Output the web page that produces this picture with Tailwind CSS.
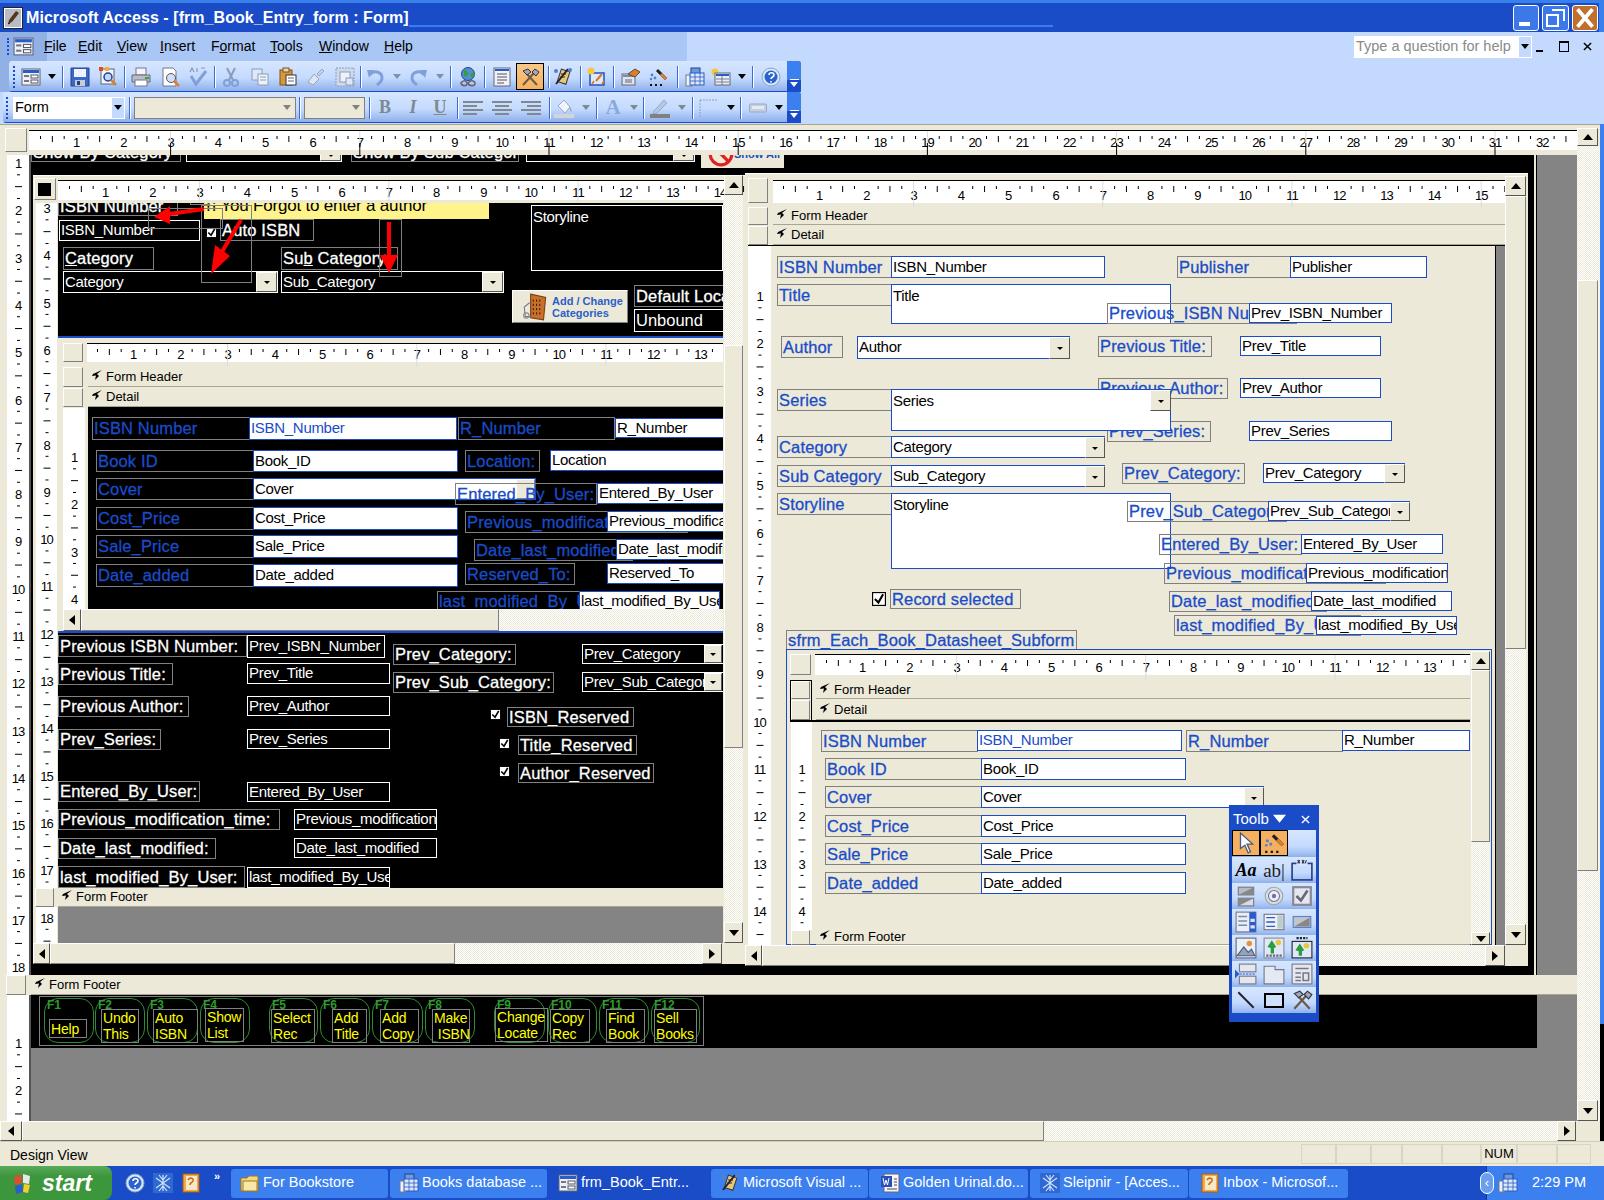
<!DOCTYPE html>
<html lang="en">
<head>
<meta charset="UTF-8">
<title>Microsoft Access - frm_Book_Entry_form</title>
<script src="https://cdn.jsdelivr.net/npm/@tailwindcss/browser@4"></script>
</head>
<body class="bg-[#848484]">
<!-- icon sheet -->
<svg class="hidden">
  <symbol id="tri" viewBox="0 0 8 8"><polygon points="0,1 8,1 4,6" fill="currentColor"/></symbol>
  <symbol id="form" viewBox="0 0 20 20"><rect x="1" y="2" width="18" height="16" fill="#eef2f8" stroke="#59647a"/><rect x="2" y="3" width="16" height="3" fill="#2a5bc8"/><rect x="3" y="8" width="5" height="2" fill="#777"/><rect x="10" y="8" width="7" height="3" fill="#fff" stroke="#556"/><rect x="3" y="13" width="5" height="2" fill="#777"/><rect x="10" y="13" width="7" height="3" fill="#fff" stroke="#556"/></symbol>
  <symbol id="save" viewBox="0 0 20 20"><path d="M1 1h18v18H1z" fill="#3a68c8" stroke="#24408c"/><rect x="4" y="2" width="12" height="8" fill="#eef2fa"/><rect x="5" y="13" width="10" height="6" fill="#c8ccd4"/><rect x="7" y="14" width="3" height="4" fill="#24408c"/></symbol>
  <symbol id="dbs" viewBox="0 0 20 20"><rect x="3" y="2" width="13" height="15" fill="#f4f6fa" stroke="#59647a"/><rect x="1" y="0" width="4" height="4" fill="#e8452c"/><rect x="7" y="0" width="4" height="4" fill="#f0b030"/><circle cx="10" cy="10" r="4" fill="#bcd8ff" stroke="#24408c" stroke-width="1.5"/><path d="M13 13l5 5" stroke="#d88030" stroke-width="2.5"/></symbol>
  <symbol id="print" viewBox="0 0 20 20"><rect x="5" y="1" width="10" height="7" fill="#f4f6fa" stroke="#778"/><path d="M1 8h18v7H1z" fill="#b8bec8" stroke="#667"/><rect x="4" y="13" width="12" height="6" fill="#fff" stroke="#778"/><rect x="14" y="10" width="4" height="2" fill="#3ca03c"/></symbol>
  <symbol id="preview" viewBox="0 0 20 20"><path d="M2 1h10l3 3v15H2z" fill="#fff" stroke="#778"/><circle cx="10" cy="11" r="4.5" fill="#cfe0f8" stroke="#556"/><path d="M13 14l5 5" stroke="#d88030" stroke-width="2.5"/></symbol>
  <symbol id="spell" viewBox="0 0 20 20"><path d="M3 9l5 8L18 4" fill="none" stroke="#7fa0d8" stroke-width="3"/><path d="M2 5l2-4 2 4M9 1v4M13 1h4" fill="none" stroke="#8c9cb8" stroke-width="1.2"/></symbol>
  <symbol id="cut" viewBox="0 0 20 20"><path d="M6 1l6 12M14 1L8 13" stroke="#8c9cb8" stroke-width="2"/><circle cx="6" cy="16" r="3" fill="none" stroke="#7fa0d8" stroke-width="2"/><circle cx="14" cy="16" r="3" fill="none" stroke="#7fa0d8" stroke-width="2"/></symbol>
  <symbol id="copy" viewBox="0 0 20 20"><rect x="2" y="2" width="10" height="11" fill="#dfe8f6" stroke="#8c9cb8"/><rect x="8" y="7" width="10" height="11" fill="#eef3fb" stroke="#8c9cb8"/><path d="M10 10h6M10 13h6" stroke="#8c9cb8"/></symbol>
  <symbol id="paste" viewBox="0 0 20 20"><rect x="2" y="3" width="12" height="15" fill="#d89838" stroke="#7a5020"/><rect x="5" y="1" width="6" height="4" fill="#e8d8a8" stroke="#7a5020"/><rect x="8" y="8" width="10" height="10" fill="#fff" stroke="#334"/><path d="M10 11h6M10 14h6" stroke="#667"/></symbol>
  <symbol id="painter" viewBox="0 0 20 20"><path d="M2 15l6-8 5 5-6 6z" fill="#dfe6f2" stroke="#9aa8c0"/><path d="M11 7l5-5 2 2-5 5z" fill="#c4d0e4" stroke="#9aa8c0"/></symbol>
  <symbol id="subf" viewBox="0 0 20 20"><rect x="1" y="1" width="18" height="18" fill="#cdd9ee" stroke="#8c9cb8" stroke-dasharray="2 1"/><rect x="5" y="5" width="10" height="10" fill="#eef3fb" stroke="#8c9cb8"/><rect x="11" y="11" width="7" height="7" fill="#dfe8f6" stroke="#8c9cb8"/></symbol>
  <symbol id="undo" viewBox="0 0 20 20"><path d="M4 8c3-5 12-4 12 3 0 3-2 5-5 7" fill="none" stroke="#7fa0d8" stroke-width="3"/><polygon points="1,3 8,3 3,11" fill="#7fa0d8"/></symbol>
  <symbol id="redo" viewBox="0 0 20 20"><path d="M16 8c-3-5-12-4-12 3 0 3 2 5 5 7" fill="none" stroke="#7fa0d8" stroke-width="3"/><polygon points="19,3 12,3 17,11" fill="#7fa0d8"/></symbol>
  <symbol id="globe" viewBox="0 0 20 20"><circle cx="10" cy="7" r="6.5" fill="#4f8fd8" stroke="#24408c"/><path d="M6 2c3 2 5 3 4 6l-3 2-1-3zM12 7l4-2 1 3-3 3z" fill="#3c9c3c"/><path d="M3 16c2-3 5-3 6 0s-5 4-6 0zM10 16c2-3 6-3 7 0s-6 4-7 0z" fill="none" stroke="#667" stroke-width="1.6"/></symbol>
  <symbol id="props" viewBox="0 0 20 20"><rect x="2" y="1" width="16" height="18" fill="#f0f2f6" stroke="#667"/><rect x="3" y="2" width="14" height="2" fill="#2a5bc8"/><path d="M5 7h10M5 10h10M5 13h10M5 16h7" stroke="#556"/></symbol>
  <symbol id="hammer" viewBox="0 0 20 20"><path d="M3 18L14 6M17 18L6 6" stroke="#6a5a48" stroke-width="2"/><path d="M3 4l5-2 3 3-4 3zM12 5l3-3 4 3-3 4z" fill="#a0a8b4" stroke="#334"/></symbol>
  <symbol id="field" viewBox="0 0 20 20"><rect x="6" y="3" width="9" height="13" fill="#e8c870" stroke="#334" transform="rotate(18 10 10)"/><path d="M3 17L15 2" stroke="#223" stroke-width="2"/><circle cx="3" cy="4" r="2" fill="#5a7fc8"/><circle cx="17" cy="3" r="2" fill="#5a7fc8"/><path d="M8 7h5M7 10h5" stroke="#223"/></symbol>
  <symbol id="order" viewBox="0 0 20 20"><rect x="3" y="6" width="14" height="12" fill="#dfe8f6" stroke="#2a5bc8" stroke-width="1.6"/><circle cx="4" cy="4" r="3.5" fill="#f4c83c"/><path d="M9 14l6-7" stroke="#d87820" stroke-width="2"/><path d="M5 17l2-3M15 17l2-3" stroke="#d87820" stroke-width="1.6"/></symbol>
  <symbol id="auto" viewBox="0 0 20 20"><rect x="1" y="7" width="13" height="11" fill="#e0e4ec" stroke="#667"/><rect x="2" y="8" width="11" height="2" fill="#7a8aa8"/><path d="M7 7l7-5 5 3-5 5z" fill="#d88030" stroke="#6a4820"/><path d="M4 13h7M4 15h7" stroke="#667"/></symbol>
  <symbol id="wand" viewBox="0 0 20 20"><path d="M9 3l9 9" stroke="#222" stroke-width="3"/><path d="M13 7l5 5" stroke="#d88030" stroke-width="3"/><circle cx="4" cy="8" r="1.4" fill="#5a7fc8"/><circle cx="7" cy="11" r="1.4" fill="#5a7fc8"/><circle cx="3" cy="12" r="1.2" fill="#5a7fc8"/><path d="M2 17h2v2H2zM7 17h2v2H7zM12 17h2v2h-2z" fill="#111"/></symbol>
  <symbol id="dbwin" viewBox="0 0 20 20"><rect x="6" y="1" width="9" height="9" fill="#6a9ae0" stroke="#24408c"/><rect x="1" y="8" width="6" height="11" fill="#eef2f8" stroke="#778"/><rect x="5" y="6" width="14" height="12" fill="#dfe8f6" stroke="#2a5bc8"/><path d="M5 10h14M5 14h14M10 6v12M15 6v12" stroke="#2a5bc8" stroke-width=".8"/></symbol>
  <symbol id="newobj" viewBox="0 0 20 20"><circle cx="4" cy="5" r="3.5" fill="#f4c83c"/><rect x="4" y="6" width="15" height="12" fill="#e8eef8" stroke="#667"/><rect x="5" y="7" width="13" height="2" fill="#2a5bc8"/><path d="M5 12h13M5 15h13M11 9v9" stroke="#667" stroke-width=".8"/></symbol>
  <symbol id="help" viewBox="0 0 20 20"><circle cx="10" cy="10" r="9" fill="#d8e6fa" stroke="#8ca4c8"/><circle cx="10" cy="10" r="6.5" fill="#2a62d0"/><path d="M8 8c0-3 5-3 5 0 0 2-3 2-3 4M10 14v1.6" fill="none" stroke="#fff" stroke-width="1.6"/></symbol>
  <symbol id="alignl" viewBox="0 0 20 14"><path d="M0 1h20M0 5h14M0 9h20M0 13h14" stroke="#808890" stroke-width="2"/></symbol>
  <symbol id="alignc" viewBox="0 0 20 14"><path d="M0 1h20M3 5h14M0 9h20M3 13h14" stroke="#808890" stroke-width="2"/></symbol>
  <symbol id="alignr" viewBox="0 0 20 14"><path d="M0 1h20M6 5h14M0 9h20M6 13h14" stroke="#808890" stroke-width="2"/></symbol>
  <symbol id="fill" viewBox="0 0 20 20"><path d="M4 8l6-6 6 7-5 6z" fill="#f0f4fb" stroke="#9aa8c0"/><path d="M16 9c2 2 2 4 1 5-1-1-2-3-1-5" fill="#9aa8c0"/><rect x="0" y="16" width="20" height="4" fill="#d0d4dc"/></symbol>
  <symbol id="pen" viewBox="0 0 20 20"><path d="M4 13L14 2l3 3L7 15l-4 1z" fill="#b4c8e8" stroke="#9aa8c0"/><rect x="0" y="16" width="20" height="4" fill="#808080"/></symbol>
  <symbol id="border" viewBox="0 0 20 20"><path d="M1 2h18M1 2v17" stroke="#8ca0c0" stroke-dasharray="2 1"/></symbol>
  <symbol id="effect" viewBox="0 0 18 10"><rect x=".5" y="1" width="17" height="8" rx="1" fill="#c4cfe0" stroke="#98a8c0"/><rect x="3" y="3" width="12" height="3" fill="#e4eaf4"/></symbol>
  <symbol id="pointer" viewBox="0 0 20 20"><path d="M5 1v14l4-3 3 7 2-1-3-7h5z" fill="#fff" stroke="#4a5a80" stroke-width="1.2"/></symbol>
  <symbol id="label-box" viewBox="0 0 20 20"><rect x="1" y="4" width="18" height="15" fill="none" stroke="#24408c" stroke-width="1.5"/><rect x="5" y="0" width="10" height="6" fill="#d5e6ff"/><path d="M6 1l2 3M8 1L6 4M10 1l2 3M12 1l-2 3M14 1l-1 3" stroke="#334"/></symbol>
  <symbol id="toggle" viewBox="0 0 20 20"><rect x="3" y="2" width="14" height="7" fill="#b8bcc4" stroke="#778"/><path d="M3 9l14-7v7z" fill="#888"/><rect x="3" y="12" width="14" height="7" fill="#d8dce4" stroke="#778"/><path d="M3 19l14-7H3z" fill="#888"/></symbol>
  <symbol id="radio" viewBox="0 0 20 20"><circle cx="10" cy="10" r="8" fill="#d8dce4" stroke="#9aa"/><circle cx="10" cy="10" r="5" fill="#eef" stroke="#778"/><circle cx="10" cy="10" r="2" fill="#6a7a9c"/></symbol>
  <symbol id="check" viewBox="0 0 20 20"><rect x="2" y="2" width="16" height="16" fill="#e4e8ee" stroke="#889" stroke-width="2"/><path d="M5 10l4 4 6-9" fill="none" stroke="#667" stroke-width="2.4"/></symbol>
  <symbol id="combo" viewBox="0 0 20 20"><rect x="1" y="1" width="18" height="18" fill="#e8eef8" stroke="#778"/><rect x="13" y="1" width="6" height="18" fill="#2a5bc8"/><path d="M3 5h8M3 9h8M3 13h8" stroke="#7a8aa8" stroke-width="1.4"/><path d="M14 7h4v3h-4zM14 13h4v3h-4z" fill="#dde"/></symbol>
  <symbol id="listb" viewBox="0 0 20 20"><rect x="1" y="3" width="18" height="14" fill="#eef2f8" stroke="#778"/><rect x="13" y="4" width="5" height="12" fill="#bcc"/><path d="M3 6h8M3 10h8M3 14h8" stroke="#2a5bc8" stroke-width="1.2"/></symbol>
  <symbol id="cmd" viewBox="0 0 20 20"><rect x="2" y="5" width="16" height="10" fill="#c0c4cc" stroke="#5a7fc8"/><path d="M3 14l14-8v8z" fill="#888"/></symbol>
  <symbol id="img" viewBox="0 0 20 20"><rect x="1" y="1" width="18" height="18" fill="#e8f0fa" stroke="#667"/><circle cx="13" cy="6" r="2.5" fill="#e8923c"/><path d="M2 17l6-8 4 5 3-3 3 6z" fill="#8ca4c8" stroke="#556"/></symbol>
  <symbol id="unb" viewBox="0 0 20 20"><rect x="1" y="1" width="18" height="18" fill="#dfe8f6" stroke="#889"/><circle cx="14" cy="5" r="2.5" fill="#e8c83c"/><path d="M8 3l4 6-2 1v5H7v-5L4 9z" fill="#2c9c3c"/><path d="M3 17h14" stroke="#667" stroke-dasharray="2 1" stroke-width="2"/></symbol>
  <symbol id="bnd" viewBox="0 0 20 20"><rect x="1" y="4" width="18" height="15" fill="#dfe8f6" stroke="#223"/><circle cx="14" cy="8" r="2.5" fill="#e8c83c"/><path d="M8 6l4 6-2 1v4H7v-4l-3-1z" fill="#2c9c3c"/><path d="M5 1h10" stroke="#223" stroke-dasharray="2 1" stroke-width="2"/></symbol>
  <symbol id="pgbr" viewBox="0 0 20 20"><rect x="4" y="1" width="15" height="7" fill="#e4e8ee" stroke="#778"/><rect x="4" y="12" width="15" height="7" fill="#e4e8ee" stroke="#778"/><path d="M1 10h18" stroke="#2a5bc8" stroke-dasharray="2 1"/><polygon points="0,6 4,10 0,14" fill="#2a5bc8"/></symbol>
  <symbol id="tabc" viewBox="0 0 20 20"><path d="M1 19V3h10v3h8v13z" fill="#e4eaf4" stroke="#778"/></symbol>
  <symbol id="grid" viewBox="0 0 20 20"><rect x="1" y="1" width="18" height="18" fill="#e4e8ee" stroke="#778"/><path d="M4 5h12M4 9h5M4 13h5M11 9h5v7h-5zM4 16h5" stroke="#778" stroke-width="1.4" fill="none"/></symbol>
  <symbol id="sfolder" viewBox="0 0 20 20"><path d="M1 5h6l2-2h9v15H1z" fill="#f4d884" stroke="#a07820"/><rect x="3" y="8" width="14" height="10" fill="#f8e8a8" stroke="#a07820"/></symbol>
  <symbol id="word" viewBox="0 0 20 20"><rect x="4" y="1" width="15" height="18" fill="#f4f6fa" stroke="#667"/><rect x="1" y="3" width="11" height="11" fill="#2a50b8"/><path d="M3 5l1.500 7 1.500-5 1.500 5L9 5" fill="none" stroke="#fff"/><path d="M7 16h10M14 6h3M14 9h3M14 12h3" stroke="#445"/></symbol>
  <symbol id="sleip" viewBox="0 0 20 20"><rect x="0" y="0" width="20" height="20" fill="#2f68d0"/><path d="M10 2v16M3 5l14 10M17 5L3 15M6 2l4 5 4-5M6 18l4-5 4 5" stroke="#cfe2fa" stroke-width="1.2" fill="none"/></symbol>
  <symbol id="inbox" viewBox="0 0 20 20"><rect x="2" y="1" width="16" height="18" fill="#f0a848" stroke="#a85c10"/><rect x="5" y="3" width="11" height="14" fill="#f8e8c8"/><path d="M7 7c2-3 6-2 5 1-1 2-3 1-3 4" fill="none" stroke="#c07010" stroke-width="1.6"/></symbol>
</svg>

<div class="w-[1604px] h-[1200px] flex flex-col overflow-hidden font-['Liberation_Sans',sans-serif] text-black">

  <!-- title bar -->
  <div class="relative h-[32px] flex items-center bg-[#1a4cc8] border-t-[3px] border-r-[5px] border-[#3a80ec] shrink-0">
    <div class="ml-[3px] w-[20px] h-[22px] bg-white border border-[#223] flex items-center justify-center">
      <svg viewBox="0 0 16 18" class="w-[16px] h-[18px]"><rect width="16" height="18" fill="#b8bcc4"/><path d="M11 2l3 2-7 9-4 2 1-4z" fill="#5a3418"/><path d="M3 15l2-1" stroke="#111"/></svg>
    </div>
    <span class="ml-[3px] text-white font-bold text-[16px] tracking-[0.06px] whitespace-nowrap">Microsoft Access - [frm_Book_Entry_form : Form]</span>
    <div class="absolute left-[409px] w-[644px] top-[22px] h-[2px] bg-[#3a7de8]"></div>
    <div class="ml-auto flex gap-[3px] mr-[1px] h-[26px]">
      <div class="w-[26px] rounded-[3px] border border-white bg-[#3c78e8] flex items-end pl-[5px] pb-[4px]"><span class="block w-[11px] h-[4px] bg-white"></span></div>
      <div class="relative w-[27px] rounded-[3px] border border-white bg-[#3c78e8]"><span class="absolute left-[3px] top-[8px] w-[13px] h-[13px] border-2 border-white"></span><span class="absolute left-[9px] top-[3px] w-[13px] h-[12px] border-2 border-white border-l-0 border-b-0"></span></div>
      <div class="w-[26px] rounded-[3px] border border-white bg-[#c0702c] flex items-center justify-center"><svg viewBox="0 0 16 16" class="w-[20px] h-[20px]"><path d="M2 1l12 14M14 1L2 15" stroke="#fff" stroke-width="3"/></svg></div>
    </div>
  </div>

  <!-- menu and standard toolbar, on the darker band -->
  <div class="h-[60px] shrink-0 bg-[linear-gradient(90deg,#90b0e6_47px,#a9c6f4_47px,#a9c6f4_687px,#c3dafe_687px)]">
    <div class="h-[29px] flex items-center text-[14px]">
      <span class="ml-[7px] w-[3px] h-[17px] border-l-2 border-dotted border-[#1a4cc8]"></span>
      <svg class="ml-[3px] w-[21px] h-[21px]"><use href="#form"/></svg>
      <span class="ml-[10px] w-[34px]"><u>F</u>ile</span>
      <span class="w-[39px]"><u>E</u>dit</span>
      <span class="w-[43px]"><u>V</u>iew</span>
      <span class="w-[51px]"><u>I</u>nsert</span>
      <span class="w-[59px]">F<u>o</u>rmat</span>
      <span class="w-[49px]"><u>T</u>ools</span>
      <span class="w-[65px]"><u>W</u>indow</span>
      <span><u>H</u>elp</span>
      <div class="ml-auto flex items-center h-[22px] text-[14.5px]">
        <div class="w-[178px] h-full bg-white flex items-center justify-between text-[#8a8a8a] pl-[2px]">Type a question for help<span class="w-[14px] h-full bg-[#c3dafe] flex items-center justify-center border border-white"><svg class="w-2 h-2 text-black"><use href="#tri"/></svg></span></div>
        <span class="ml-[4px] w-[7px] h-[2px] mt-[8px] bg-black"></span>
        <span class="relative ml-[16px] w-[10px] h-[11px] border border-black border-t-2 bg-transparent"></span>
        <svg viewBox="0 0 10 10" class="ml-[14px] mr-[12px] w-[9px] h-[9px]"><path d="M1 1l8 8M9 1l-8 8" stroke="#000" stroke-width="1.6"/></svg>
      </div>
    </div>
    <div class="ml-[9px] w-[792px] h-[31px] flex items-center rounded-l-[3px] bg-[linear-gradient(#d6e6ff_0%,#c4dafe_55%,#a6c3f4_78%,#8fb0e8_96%,#1a4cc8_96%)]">
      <span class="ml-[4px] w-[3px] h-[22px] border-l-2 border-dotted border-[#1a4cc8]"></span>
      <svg class="ml-[5px] w-5 h-5"><use href="#form"/></svg>
      <svg class="ml-[7px] w-2 h-2 text-black"><use href="#tri"/></svg>
      <span class="ml-[6px] w-[2px] h-[22px] bg-[#3a6cd8] border-r border-white"></span>
      <svg class="ml-[6px] w-5 h-5"><use href="#save"/></svg>
      <svg class="ml-[8px] w-5 h-5"><use href="#dbs"/></svg>
      <span class="ml-[6px] w-[2px] h-[22px] bg-[#3a6cd8] border-r border-white"></span>
      <svg class="ml-[5px] w-5 h-5"><use href="#print"/></svg>
      <svg class="ml-[10px] w-5 h-5"><use href="#preview"/></svg>
      <svg class="ml-[7px] w-5 h-5"><use href="#spell"/></svg>
      <span class="ml-[6px] w-[2px] h-[22px] bg-[#3a6cd8] border-r border-white"></span>
      <svg class="ml-[5px] w-5 h-5"><use href="#cut"/></svg>
      <svg class="ml-[9px] w-5 h-5"><use href="#copy"/></svg>
      <svg class="ml-[8px] w-5 h-5"><use href="#paste"/></svg>
      <svg class="ml-[8px] w-5 h-5"><use href="#painter"/></svg>
      <svg class="ml-[9px] w-5 h-5"><use href="#subf"/></svg>
      <span class="ml-[5px] w-[2px] h-[22px] bg-[#3a6cd8] border-r border-white"></span>
      <svg class="ml-[4px] w-5 h-5"><use href="#undo"/></svg>
      <svg class="ml-[7px] w-2 h-2 text-[#8090a8]"><use href="#tri"/></svg>
      <svg class="ml-[7px] w-5 h-5"><use href="#redo"/></svg>
      <svg class="ml-[8px] w-2 h-2 text-[#8090a8]"><use href="#tri"/></svg>
      <span class="ml-[6px] w-[2px] h-[22px] bg-[#3a6cd8] border-r border-white"></span>
      <svg class="ml-[6px] w-5 h-5"><use href="#globe"/></svg>
      <span class="ml-[6px] w-[2px] h-[22px] bg-[#3a6cd8] border-r border-white"></span>
      <svg class="ml-[6px] w-5 h-5"><use href="#props"/></svg>
      <span class="ml-[4px] w-[28px] h-[27px] bg-[linear-gradient(#f8c888,#f4b060)] border border-black flex items-center justify-center"><svg class="w-5 h-5"><use href="#hammer"/></svg></span>
      <span class="ml-[4px] w-[2px] h-[22px] bg-[#3a6cd8] border-r border-white"></span>
      <svg class="ml-[3px] w-5 h-5"><use href="#field"/></svg>
      <span class="ml-[7px] w-[2px] h-[22px] bg-[#3a6cd8] border-r border-white"></span>
      <svg class="ml-[5px] w-5 h-5"><use href="#order"/></svg>
      <span class="ml-[6px] w-[2px] h-[22px] bg-[#3a6cd8] border-r border-white"></span>
      <svg class="ml-[6px] w-5 h-5"><use href="#auto"/></svg>
      <svg class="ml-[7px] w-5 h-5"><use href="#wand"/></svg>
      <span class="ml-[9px] w-[2px] h-[22px] bg-[#3a6cd8] border-r border-white"></span>
      <svg class="ml-[6px] w-5 h-5"><use href="#dbwin"/></svg>
      <svg class="ml-[6px] w-5 h-5"><use href="#newobj"/></svg>
      <svg class="ml-[7px] w-2 h-2 text-black"><use href="#tri"/></svg>
      <span class="ml-[6px] w-[2px] h-[22px] bg-[#3a6cd8] border-r border-white"></span>
      <svg class="ml-[7px] w-5 h-5"><use href="#help"/></svg>
      <span class="ml-auto w-[14px] h-full rounded-r-[2px] bg-[linear-gradient(#3c80f0_60%,#1a4cc8_60%)] flex flex-col justify-end items-center pb-[3px]"><span class="w-[9px] h-[1px] bg-white mb-[1px]"></span><svg class="w-2 h-2 text-white"><use href="#tri"/></svg></span>
    </div>
  </div>

  <!-- formatting toolbar -->
  <div class="h-[32px] shrink-0 bg-[#c3dafe] pl-[3px]">
    <div class="w-[798px] h-[31px] flex items-center rounded-l-[3px] bg-[linear-gradient(#d6e6ff_0%,#c4dafe_55%,#a6c3f4_78%,#8fb0e8_96%,#1a4cc8_96%)]">
      <span class="ml-[3px] w-[3px] h-[22px] border-l-2 border-dotted border-[#1a4cc8]"></span>
      <div class="ml-[4px] w-[112px] h-[22px] bg-white flex items-center justify-between text-[14.5px] pl-[2px]">Form<span class="w-[14px] h-full bg-[#c3dafe] border border-white flex items-center justify-center"><svg class="w-2 h-2 text-black"><use href="#tri"/></svg></span></div>
      <span class="ml-[4px] w-[2px] h-[22px] bg-[#3a6cd8] border-r border-white"></span>
      <div class="ml-[3px] w-[162px] h-[22px] bg-[#ece9d8] border border-[#808080] flex items-center justify-end pr-[4px]"><svg class="w-2 h-2 text-[#808080]"><use href="#tri"/></svg></div>
      <span class="ml-[3px] w-[2px] h-[22px] bg-[#3a6cd8] border-r border-white"></span>
      <div class="ml-[3px] w-[61px] h-[22px] bg-[#ece9d8] border border-[#808080] flex items-center justify-end pr-[4px]"><svg class="w-2 h-2 text-[#808080]"><use href="#tri"/></svg></div>
      <span class="ml-[4px] w-[2px] h-[22px] bg-[#3a6cd8] border-r border-white"></span>
      <span class="ml-[6px] w-[16px] text-center font-['Liberation_Serif',serif] font-bold text-[18px] text-[#808890]">B</span>
      <span class="ml-[12px] w-[16px] text-center font-['Liberation_Serif',serif] font-bold italic text-[18px] text-[#808890]">I</span>
      <span class="ml-[11px] w-[16px] text-center font-['Liberation_Serif',serif] font-bold underline text-[18px] text-[#808890]">U</span>
      <span class="ml-[9px] w-[2px] h-[22px] bg-[#3a6cd8] border-r border-white"></span>
      <svg class="ml-[4px] w-5 h-[14px]"><use href="#alignl"/></svg>
      <svg class="ml-[9px] w-5 h-[14px]"><use href="#alignc"/></svg>
      <svg class="ml-[9px] w-5 h-[14px]"><use href="#alignr"/></svg>
      <span class="ml-[8px] w-[2px] h-[22px] bg-[#3a6cd8] border-r border-white"></span>
      <svg class="ml-[3px] w-5 h-5"><use href="#fill"/></svg>
      <svg class="ml-[8px] w-2 h-2 text-[#808890]"><use href="#tri"/></svg>
      <span class="ml-[6px] w-[2px] h-[22px] bg-[#3a6cd8] border-r border-white"></span>
      <span class="ml-[6px] w-[18px] text-center font-['Liberation_Serif',serif] font-bold text-[21px] text-[#8aa8dc]">A</span>
      <svg class="ml-[8px] w-2 h-2 text-[#808890]"><use href="#tri"/></svg>
      <span class="ml-[5px] w-[2px] h-[22px] bg-[#3a6cd8] border-r border-white"></span>
      <svg class="ml-[5px] w-5 h-5"><use href="#pen"/></svg>
      <svg class="ml-[8px] w-2 h-2 text-[#808890]"><use href="#tri"/></svg>
      <span class="ml-[6px] w-[2px] h-[22px] bg-[#3a6cd8] border-r border-white"></span>
      <svg class="ml-[5px] w-5 h-5"><use href="#border"/></svg>
      <svg class="ml-[8px] w-2 h-2 text-black"><use href="#tri"/></svg>
      <span class="ml-[5px] w-[2px] h-[22px] bg-[#3a6cd8] border-r border-white"></span>
      <svg class="ml-[7px] w-[18px] h-[10px]"><use href="#effect"/></svg>
      <svg class="ml-[8px] w-2 h-2 text-black"><use href="#tri"/></svg>
      <span class="ml-auto w-[14px] h-full rounded-r-[2px] bg-[linear-gradient(#3c80f0_60%,#1a4cc8_60%)] flex flex-col justify-end items-center pb-[3px]"><span class="w-[9px] h-[1px] bg-white mb-[1px]"></span><svg class="w-2 h-2 text-white"><use href="#tri"/></svg></span>
    </div>
  </div>

  <!-- MDI client: a form in design view, controls filled in below -->
  <div id="design" class="relative flex-1 bg-[#ece9d8] overflow-hidden"></div>

  <!-- status bar -->
  <div class="h-[25px] shrink-0 bg-[#ece9d8] border-t border-[#d0cdbc] flex items-stretch text-[14px] pl-[10px] py-[2px]">
    <span class="w-[1291px] flex items-center pt-[2px]">Design View</span>
    <span class="w-[35px] border border-[#d8d5c4]"></span>
    <span class="w-[35px] border border-[#d8d5c4]"></span>
    <span class="w-[31px] border border-[#d8d5c4]"></span>
    <span class="w-[40px] border border-[#d8d5c4]"></span>
    <span class="w-[39px] border border-[#d8d5c4]"></span>
    <span class="w-[36px] border border-[#d8d5c4] flex items-center justify-center text-[13px]">NUM</span>
    <span class="w-[40px] border border-[#d8d5c4]"></span>
    <span class="w-[34px] border border-[#d8d5c4]"></span>
  </div>

  <!-- taskbar -->
  <div class="h-[34px] shrink-0 bg-[#1a4cc8] flex items-center text-white text-[14.5px]">
    <div class="w-[112px] h-full rounded-r-[8px] bg-[linear-gradient(#5aaa5a,#3c963c_30%,#3c963c)] flex items-center pl-[12px]">
      <svg viewBox="0 0 24 24" class="w-[24px] h-[24px]"><path d="M2 6l7-3 1 9-7 2z" fill="#d8502c"/><path d="M11 3l7 2-1 8-6-1z" fill="#e8e8e8"/><path d="M3 15l7-2 1 8-7 2z" fill="#2a5fc8"/><path d="M12 13l6 1-2 8-5-1z" fill="#f0d030"/></svg>
      <span class="ml-[6px] italic font-bold text-[23px] leading-none">start</span>
    </div>
    <div class="w-[119px] flex items-center pl-[13px]">
      <svg class="w-[20px] h-[22px]"><use href="#help"/></svg>
      <svg class="ml-[8px] w-[20px] h-[22px]"><use href="#sleip"/></svg>
      <svg class="ml-[8px] w-[20px] h-[22px]"><use href="#inbox"/></svg>
      <span class="ml-[13px] -mt-[14px] text-[11px] font-bold">»</span>
    </div>
    <div class="w-[157px] h-[29px] mr-[2px] rounded-[3px] bg-[#3c80f0] flex items-center pl-[9px] overflow-hidden whitespace-nowrap"><svg class="w-[20px] h-[20px] shrink-0"><use href="#sfolder"/></svg><span class="ml-[3px]">For Bookstore</span></div>
    <div class="w-[157px] h-[29px] mr-[2px] rounded-[3px] bg-[#3c80f0] flex items-center pl-[9px] overflow-hidden whitespace-nowrap"><svg class="w-[20px] h-[20px] shrink-0"><use href="#dbwin"/></svg><span class="ml-[3px]">Books database ...</span></div>
    <div class="w-[160px] h-[29px] mr-[2px] rounded-[3px] bg-[#1a4cc8] flex items-center pl-[9px] overflow-hidden whitespace-nowrap"><svg class="w-[20px] h-[20px] shrink-0"><use href="#form"/></svg><span class="ml-[3px]">frm_Book_Entr...</span></div>
    <div class="w-[157px] h-[29px] mr-[1px] rounded-[3px] bg-[#3c80f0] flex items-center pl-[9px] overflow-hidden whitespace-nowrap"><svg class="w-[20px] h-[20px] shrink-0"><use href="#field"/></svg><span class="ml-[3px]">Microsoft Visual ...</span></div>
    <div class="w-[159px] h-[29px] mr-[2px] rounded-[3px] bg-[#3c80f0] flex items-center pl-[11px] overflow-hidden whitespace-nowrap"><svg class="w-[20px] h-[20px] shrink-0"><use href="#word"/></svg><span class="ml-[3px]">Golden Urinal.do...</span></div>
    <div class="w-[158px] h-[29px] mr-[1px] rounded-[3px] bg-[#3c80f0] flex items-center pl-[10px] overflow-hidden whitespace-nowrap"><svg class="w-[20px] h-[20px] shrink-0"><use href="#sleip"/></svg><span class="ml-[3px]">Sleipnir - [Acces...</span></div>
    <div class="w-[159px] h-[29px] rounded-[3px] bg-[#3c80f0] flex items-center pl-[11px] overflow-hidden whitespace-nowrap"><svg class="w-[20px] h-[20px] shrink-0"><use href="#inbox"/></svg><span class="ml-[3px]">Inbox - Microsof...</span></div>
    <div class="ml-[138px] w-[118px] h-full bg-[#3c80f0] border-l border-[#123a9c] flex items-center relative">
      <span class="absolute -left-[7px] w-[14px] h-[22px] rounded-full bg-[#6a9ff0] border border-white text-center text-[13px] leading-[19px]">‹</span>
      <svg class="ml-[11px] w-[20px] h-[22px]"><use href="#dbwin"/></svg>
      <span class="ml-[14px]">2:29 PM</span>
    </div>
  </div>
</div>

<script>
// design surface: everything below is placed by page coordinates, the canvas origin is y=124
const root = document.getElementById('design');
root.ox = 0; root.oy = 124;

function box(p, x1, y1, x2, y2, cls, html) {
  const d = document.createElement('div');
  d.className = 'absolute ' + cls;
  d.style.cssText = `left:${x1 - p.ox}px;top:${y1 - p.oy}px;width:${x2 - x1}px;height:${y2 - y1}px`;
  d.ox = x1; d.oy = y1;
  if (html) d.innerHTML = html;
  p.appendChild(d);
  return d;
}

const S = 47.3;

function hruler(p, x1, y1, x2, y2, first, dark) {
  const w = x2 - x1, h = y2 - y1;
  let o = '';
  for (let n = 0; n < 40; n++) {
    const c = first + (n - 1) * S - x1;
    if (c > w + 20) break;
    if (n > 0) o += `<text x="${c}" y="${h - 4}" font-size="13" text-anchor="middle" letter-spacing="-1" fill="#000">${n}</text>`;
    o += `<path d="M${c + S / 4} 5v3M${c + S / 2} 5v6M${c + 3 * S / 4} 5v3" stroke="#000"/>`;
    if (n % 4 == 3) o += dark
      ? `<path d="M${c} 0v${h - 8}" stroke="#ddd"/><path d="M${c} ${h - 8}v13" stroke="#000"/>`
      : `<path d="M${c} 0v${h + 8}" stroke="#ddd"/>`;
  }
  box(p, x1, y1, x2, y2, 'bg-white border-t border-black', `<svg width="${w}" height="${h}" class="overflow-visible">${o}</svg>`);
}

function vruler(p, x1, y1, x2, y2, first, startN) {
  const w = x2 - x1, h = y2 - y1, m = w / 2;
  let o = '';
  for (let n = startN; n < startN + 30; n++) {
    const c = first + (n - 1) * S - y1;
    if (c > h + 20) break;
    o += `<text x="${m}" y="${c + 5}" font-size="13" text-anchor="middle" letter-spacing="-1" fill="#000">${n}</text>`;
    o += `<path d="M${m - 1} ${c + S / 4}h3M${m - 3} ${c + S / 2}h7M${m - 1} ${c + 3 * S / 4}h3" stroke="#000"/>`;
  }
  box(p, x1, y1, x2, y2, 'bg-white overflow-hidden', `<svg width="${w}" height="${h}">${o}</svg>`);
}

const GLYPH = '<svg viewBox="0 0 10 10" class="w-[10px] h-[10px] -mt-[4px] mr-[4px] shrink-0"><polygon points="10,0 1,4 0,6 4,5.500 3,10 7,6 5,4" fill="#000"/></svg>';
function section(p, x1, y1, x2, y2, text) {
  box(p, x1, y1, x2, y2, 'bg-[#ece9d8] border-b border-[#a8a690] flex items-center pl-[4px] text-[13px] whitespace-nowrap', GLYPH + text);
}
function corner(p, x1, y1, x2, y2) {
  box(p, x1, y1, x2, y2, 'bg-[#ece9d8] border border-t-white border-l-white border-b-[#808080] border-r-[#808080]');
}
function btn3d(p, x1, y1, x2, y2, glyph) {
  const g = {
    up: '<polygon points="0,8 5,2 10,8" fill="#000"/>', down: '<polygon points="0,2 10,2 5,8" fill="#000"/>',
    left: '<polygon points="8,0 8,10 2,5" fill="#000"/>', right: '<polygon points="2,0 2,10 8,5" fill="#000"/>',
    drop: '<polygon points="2,4 8,4 5,7" fill="#000"/>'
  }[glyph];
  box(p, x1, y1, x2, y2, 'bg-[#ece9d8] border border-t-white border-l-white border-b-[#555] border-r-[#555] flex items-center justify-center',
    `<svg viewBox="0 0 10 10" class="w-[10px] h-[10px]">${g}</svg>`);
}
const DITHER = 'bg-[repeating-conic-gradient(#ffffff_0_25%,#ece9d8_0_50%)] bg-[length:2px_2px]';
function thumb(p, x1, y1, x2, y2) { box(p, x1, y1, x2, y2, 'bg-[#ece9d8] border border-t-white border-l-white border-b-[#808080] border-r-[#808080]'); }
function trough(p, x1, y1, x2, y2) { box(p, x1, y1, x2, y2, DITHER); }

// blue labels sit on the form, dark forms use white text
function lab(p, x1, y1, x2, y2, t, cls) {
  const c = cls || 'text-[#1a4cc8]';
  box(p, x1, y1, x2, y2, 'border border-[#808080] flex items-center pl-[1px] text-[16.5px] tracking-[0.15px] whitespace-nowrap overflow-hidden [-webkit-text-stroke:0.3px_currentColor] ' + c, `<span>${t}</span>`);
}
const wlab = (p, x1, y1, x2, y2, t) => lab(p, x1, y1, x2, y2, t, 'text-white');
function tb(p, x1, y1, x2, y2, t, cls) {
  box(p, x1, y1, x2, y2, 'bg-white border border-[#1a4cc8] flex items-center pl-[1px] text-[15px] tracking-[-0.3px] whitespace-nowrap overflow-hidden ' + (cls || 'text-black'), t);
}
function memo(p, x1, y1, x2, y2, t) {
  box(p, x1, y1, x2, y2, 'bg-white border border-[#1a4cc8] pl-[1px] pt-[2px] text-[15px] leading-[18px] tracking-[-0.3px]', t);
}
function wtb(p, x1, y1, x2, y2, t) {
  box(p, x1, y1, x2, y2, 'bg-black border border-white flex items-center pl-[1px] text-[15px] tracking-[-0.3px] text-white whitespace-nowrap overflow-hidden', t);
}
function cb(p, x, y, s) {
  box(p, x, y, x + s, y + s, '', `<svg viewBox="0 0 12 12" class="w-full h-full"><rect x=".5" y=".5" width="11" height="11" fill="#fff" stroke="#000"/><path d="M2.500 6l3 3 4-7" fill="none" stroke="#000" stroke-width="1.800"/></svg>`);
}

// ---- outer form ----
box(root, 0, 124, 1604, 155, 'bg-[#ece9d8] border-t border-[#a8a690]');
corner(root, 5, 128, 27, 152);
hruler(root, 29, 130, 1577, 150, 76, true);
box(root, 0, 155, 7, 975, 'bg-[#ece9d8]');
vruler(root, 7, 155, 29, 975, 163, 1);
box(root, 29, 155, 31, 975, 'bg-[#555]');
const main = box(root, 31, 155, 1534, 975, 'bg-black overflow-hidden');
box(root, 1534, 155, 1537, 975, 'bg-[#ece9d8] border-r border-black');
box(root, 1537, 155, 1577, 1121, 'bg-[#848484]');

// clipped combo row at the top of the detail section
wlab(main, 31, 142, 181, 162, 'Show By Category');
wtb(main, 186, 142, 342, 162, '');
btn3d(main, 320, 148, 341, 161, 'drop');
wlab(main, 351, 142, 519, 162, 'Show By Sub Category');
wtb(main, 526, 142, 695, 162, '');
btn3d(main, 673, 148, 694, 161, 'drop');
box(main, 701, 138, 784, 168, 'bg-[#ece9d8] flex items-end pl-[7px] text-[#1a4cc8] text-[11px] font-bold',
  '<svg viewBox="0 0 24 24" class="w-[26px] h-[26px] mb-[1px] shrink-0"><circle cx="12" cy="12" r="10" fill="none" stroke="#e02020" stroke-width="3"/><path d="M5 5l14 14" stroke="#e02020" stroke-width="3"/></svg><span class="mb-[6px]">Show All</span>');

// ---- left subform ----
box(main, 33, 175, 745, 964, 'bg-[#ece9d8] border-t border-white');
corner(main, 34, 178, 56, 200);
box(main, 38, 183, 51, 196, 'bg-black');
hruler(main, 58, 180, 724, 200, 105, false);
vruler(main, 36, 203, 57, 888, 113.400, 1);
const sf = box(main, 58, 203, 723, 888, 'bg-black overflow-hidden');

wlab(sf, 58, 196, 178, 216, 'ISBN Number');
box(sf, 204, 193, 489, 219, 'bg-[#fff38c] flex items-center pl-[2px] text-[17px] tracking-[-0.2px] whitespace-nowrap', '<span class="mr-[3px] tracking-[1px]">⁞⁞</span><span>You Forgot to enter a author</span>');
box(sf, 190, 193, 210, 205, 'border border-[#808080]');
wtb(sf, 59, 220, 200, 241, 'ISBN_Number');
wlab(sf, 220, 219, 314, 241, 'Auto ISBN');
cb(sf, 206, 227, 11);
wlab(sf, 63, 247, 154, 270, '<u>C</u>ategory');
wtb(sf, 63, 271, 278, 293, 'Category');
btn3d(sf, 256, 272, 277, 292, 'drop');
wlab(sf, 281, 247, 398, 270, 'Su<u>b</u> Category');
wtb(sf, 281, 271, 504, 293, 'Sub_Category');
btn3d(sf, 482, 272, 503, 292, 'drop');
box(sf, 531, 205, 723, 271, 'border border-white text-white text-[15px] leading-[18px] tracking-[-0.3px] pl-[1px] pt-[2px]', 'Storyline');
box(sf, 512, 290, 628, 323, 'bg-[#ece9d8] border border-b-[#808080] border-r-[#808080] border-t-white border-l-white flex items-center pl-[8px] text-[#2a5fc8] text-[11px] font-bold leading-[12px]',
  '<svg viewBox="0 0 26 28" class="w-[30px] h-[30px] shrink-0"><path d="M8 2l14 3-2 21-12-2z" fill="#c8702c" stroke="#7a4010"/><path d="M10 8h9M10 12h9M10 16h9M10 20h9" stroke="#40200c" stroke-dasharray="1 2" stroke-width="2"/><path d="M7 10L2 14l1 9h5" fill="none" stroke="#778"/><circle cx="4" cy="22" r="2.500" fill="none" stroke="#889"/></svg><span class="ml-[1px]">Add / Change<br>Categories</span>');
wlab(sf, 634, 285, 760, 307, 'Default Location');
box(sf, 634, 309, 760, 332, 'border border-white text-white text-[16.5px] flex items-center pl-[1px]', 'Unbound');
// the loose rectangles and red pointers left on the form
box(sf, 148, 208, 223, 229, 'border border-[#808080]');
box(sf, 201, 205, 252, 283, 'border border-[#808080]');
box(sf, 379, 219, 402, 277, 'border border-[#808080]');
box(sf, 58, 203, 723, 337, 'pointer-events-none', `<svg width="665" height="134" class="overflow-visible">
  <g stroke="#f00" stroke-width="4" fill="#f00">
    <path d="M146 6l-42 6" /><polygon points="96,14 112,3 112,21" stroke="none"/>
    <path d="M183 17l-24 40" /><polygon points="153,71 157,42 172,53" stroke="none"/>
    <path d="M331 19v45" /><polygon points="331,70 322,52 340,52" stroke="none"/>
  </g></svg>`);

// inner subform of the left form
box(sf, 58, 336, 723, 338, 'bg-[#1a4cc8]');
box(sf, 58, 338, 723, 631, 'bg-[#ece9d8]');
corner(sf, 63, 343, 83, 362);
hruler(sf, 87, 343, 723, 362, 133, false);
corner(sf, 63, 367, 83, 387);
corner(sf, 63, 388, 83, 407);
section(sf, 88, 367, 723, 387, 'Form Header');
section(sf, 88, 388, 723, 407, 'Detail');
vruler(sf, 63, 408, 85, 609, 457, 1);
const inner = box(sf, 88, 407, 723, 609, 'bg-black overflow-hidden');
[
  [92, 417, 250, 440, 'ISBN Number'], [458, 417, 615, 440, 'R_Number'],
  [96, 450, 254, 472, 'Book ID'], [465, 450, 540, 472, 'Location:'],
  [96, 478, 254, 500, 'Cover'], [96, 507, 254, 530, 'Cost_Price'],
  [465, 511, 688, 533, 'Previous_modification_time'], [96, 535, 254, 558, 'Sale_Price'],
  [474, 539, 633, 561, 'Date_last_modified:'], [96, 564, 254, 587, 'Date_added'],
  [465, 563, 575, 585, 'Reserved_To:'], [437, 591, 640, 612, 'last_modified_By_User']
].forEach(a => lab(inner, ...a));
tb(inner, 249, 417, 457, 440, 'ISBN_Number', 'text-[#1a4cc8]');
tb(inner, 615, 418, 760, 438, 'R_Number');
tb(inner, 253, 450, 458, 472, 'Book_ID');
tb(inner, 550, 450, 760, 471, 'Location');
tb(inner, 253, 478, 536, 500, 'Cover');
corner(inner, 516, 479, 535, 499);
lab(inner, 455, 483, 597, 505, 'Entered_By_User:');
tb(inner, 597, 483, 760, 504, 'Entered_By_User');
tb(inner, 253, 507, 458, 530, 'Cost_Price');
tb(inner, 607, 511, 760, 532, 'Previous_modification');
tb(inner, 253, 535, 458, 558, 'Sale_Price');
tb(inner, 616, 539, 760, 560, 'Date_last_modified');
tb(inner, 253, 564, 458, 587, 'Date_added');
tb(inner, 607, 563, 760, 584, 'Reserved_To');
tb(inner, 579, 591, 720, 612, 'last_modified_By_User');

btn3d(sf, 63, 609, 81, 631, 'left');
thumb(sf, 81, 609, 499, 631);
trough(sf, 499, 609, 723, 631);
box(sf, 58, 631, 723, 633, 'bg-[#1a4cc8]');

// previous-values block under the inner subform
[
  [58, 635, 247, 657, 'Previous ISBN Number:'], [58, 663, 173, 685, 'Previous Title:'],
  [58, 696, 189, 717, 'Previous Author:'], [58, 729, 161, 750, 'Prev_Series:'],
  [58, 781, 200, 802, 'Entered_By_User:'], [58, 809, 280, 830, 'Previous_modification_time:'],
  [58, 838, 216, 859, 'Date_last_modified:'], [58, 866, 245, 888, 'last_modified_By_User:'],
  [393, 644, 516, 665, 'Prev_Category:'], [393, 672, 554, 693, 'Prev_Sub_Category:'],
  [507, 707, 634, 727, 'ISBN_Reserved'], [518, 735, 637, 755, 'Title_Reserved'], [518, 763, 654, 783, 'Author_Reserved']
].forEach(a => wlab(sf, ...a));
[
  [247, 635, 385, 658, 'Prev_ISBN_Number'], [247, 663, 390, 684, 'Prev_Title'],
  [247, 696, 390, 716, 'Prev_Author'], [247, 729, 390, 749, 'Prev_Series'],
  [247, 782, 390, 802, 'Entered_By_User'], [294, 809, 437, 830, 'Previous_modification'],
  [294, 838, 437, 858, 'Date_last_modified'], [247, 867, 390, 888, 'last_modified_By_User'],
  [582, 644, 760, 664, 'Prev_Category'], [582, 672, 760, 692, 'Prev_Sub_Categor']
].forEach(a => wtb(sf, ...a));
btn3d(sf, 704, 645, 722, 663, 'drop');
btn3d(sf, 704, 673, 722, 691, 'drop');
cb(sf, 490, 709, 11); cb(sf, 499, 738, 11); cb(sf, 499, 766, 11);

corner(main, 35, 888, 54, 907);
section(main, 58, 888, 723, 907, 'Form Footer');
box(main, 58, 907, 723, 943, 'bg-[#848484]');
vruler(main, 36, 907, 57, 943, 113.400, 17);
btn3d(main, 724, 175, 743, 195, 'up');
trough(main, 724, 195, 743, 345);
thumb(main, 724, 345, 743, 748);
trough(main, 724, 748, 743, 922);
btn3d(main, 724, 922, 743, 943, 'down');
btn3d(main, 33, 943, 50, 964, 'left');
thumb(main, 50, 943, 455, 964);
trough(main, 455, 943, 702, 964);
btn3d(main, 702, 943, 722, 964, 'right');

// ---- right subform ----
box(main, 745, 173, 1528, 966, 'bg-[#ece9d8] border-t border-white');
corner(main, 748, 178, 768, 203);
hruler(main, 773, 180, 1505, 203, 819, false);
corner(main, 748, 207, 768, 225);
corner(main, 748, 226, 768, 245);
section(main, 773, 207, 1505, 225, 'Form Header');
section(main, 773, 226, 1505, 245, 'Detail');
box(main, 748, 245, 1505, 246, 'bg-black');
vruler(main, 748, 246, 771, 945, 296, 1);
const rf = box(main, 773, 246, 1495, 945, 'bg-[#ece9d8] overflow-hidden');
box(main, 1495, 246, 1505, 945, 'bg-[#848484] border-l border-black');

[
  [1098, 378, 1228, 399, 'Previous Author:'],
  [1107, 421, 1211, 442, 'Prev_Series:']
].forEach(a => lab(rf, ...a));
[
  [777, 256, 892, 278, 'ISBN Number'], [1177, 256, 1291, 278, 'Publisher'],
  [777, 284, 892, 306, 'Title'], [781, 336, 843, 358, 'Author'],
  [1098, 336, 1212, 357, 'Previous Title:'], [777, 389, 892, 411, 'Series'],
  [777, 436, 892, 458, 'Category'], [777, 465, 892, 487, 'Sub Category'],
  [1122, 463, 1245, 484, 'Prev_Category:'], [777, 493, 892, 515, 'Storyline'],
  [890, 589, 1021, 609, 'Record selected'], [786, 630, 1077, 650, 'sfrm_Each_Book_Datasheet_Subform']
].forEach(a => lab(rf, ...a));
tb(rf, 891, 256, 1105, 278, 'ISBN_Number');
tb(rf, 1290, 256, 1427, 278, 'Publisher');
memo(rf, 891, 284, 1171, 324, 'Title');
lab(rf, 1107, 303, 1297, 324, 'Previous_ISBN Number:');
tb(rf, 1249, 303, 1392, 323, 'Prev_ISBN_Number');
tb(rf, 857, 336, 1070, 359, 'Author');
btn3d(rf, 1049, 337, 1070, 359, 'drop');
tb(rf, 1240, 336, 1381, 356, 'Prev_Title');
tb(rf, 1240, 378, 1381, 398, 'Prev_Author');
memo(rf, 891, 389, 1171, 431, 'Series');
btn3d(rf, 1150, 390, 1171, 411, 'drop');
tb(rf, 1249, 421, 1392, 441, 'Prev_Series');
tb(rf, 891, 436, 1105, 458, 'Category');
btn3d(rf, 1085, 437, 1105, 458, 'drop');
tb(rf, 891, 465, 1105, 487, 'Sub_Category');
btn3d(rf, 1085, 466, 1105, 487, 'drop');
tb(rf, 1263, 463, 1405, 483, 'Prev_Category');
btn3d(rf, 1384, 464, 1405, 483, 'drop');
memo(rf, 891, 493, 1171, 569, 'Storyline');
lab(rf, 1127, 501, 1287, 522, 'Prev_Sub_Category:');
tb(rf, 1268, 501, 1410, 521, 'Prev_Sub_Categor');
btn3d(rf, 1390, 502, 1410, 521, 'drop');
lab(rf, 1159, 534, 1302, 555, 'Entered_By_User:');
tb(rf, 1301, 534, 1443, 554, 'Entered_By_User');
lab(rf, 1164, 563, 1386, 584, 'Previous_modification_time');
tb(rf, 1306, 563, 1448, 583, 'Previous_modification');
lab(rf, 1169, 591, 1327, 612, 'Date_last_modified:');
tb(rf, 1311, 591, 1452, 611, 'Date_last_modified');
lab(rf, 1174, 615, 1361, 636, 'last_modified_By_User:');
tb(rf, 1316, 616, 1457, 635, 'last_modified_By_User');
cb(rf, 872, 592, 14);

// subform inside the right form
box(rf, 786, 649, 1492, 945, 'bg-[#ece9d8] border border-[#1a4cc8]');
corner(rf, 790, 654, 811, 675);
hruler(rf, 815, 654, 1470, 675, 862, false);
box(rf, 790, 680, 812, 721, 'border border-black');
corner(rf, 791, 681, 810, 699);
corner(rf, 791, 700, 810, 720);
section(rf, 816, 681, 1470, 699, 'Form Header');
section(rf, 816, 700, 1470, 720, 'Detail');
box(rf, 790, 720, 1470, 722, 'bg-black');
vruler(rf, 791, 722, 812, 930, 769, 1);
corner(rf, 791, 930, 810, 945);
section(rf, 816, 930, 1470, 945, 'Form Footer');
[
  [821, 730, 978, 752, 'ISBN Number'], [1186, 730, 1343, 752, 'R_Number'],
  [825, 758, 982, 780, 'Book ID'], [825, 786, 982, 808, 'Cover'],
  [825, 815, 982, 837, 'Cost_Price'], [825, 843, 982, 865, 'Sale_Price'], [825, 872, 982, 894, 'Date_added']
].forEach(a => lab(rf, ...a));
tb(rf, 977, 730, 1182, 751, 'ISBN_Number', 'text-[#1a4cc8]');
tb(rf, 1342, 730, 1470, 751, 'R_Number');
tb(rf, 981, 758, 1186, 780, 'Book_ID');
tb(rf, 981, 786, 1264, 808, 'Cover');
btn3d(rf, 1244, 787, 1264, 808, 'drop');
tb(rf, 981, 815, 1186, 837, 'Cost_Price');
tb(rf, 981, 843, 1186, 865, 'Sale_Price');
tb(rf, 981, 872, 1186, 894, 'Date_added');
btn3d(rf, 1471, 651, 1490, 670, 'up');
thumb(rf, 1471, 670, 1490, 842);
trough(rf, 1471, 842, 1490, 932);
btn3d(rf, 1471, 932, 1490, 945, 'down');

btn3d(main, 1505, 176, 1526, 196, 'up');
thumb(main, 1505, 196, 1526, 649);
trough(main, 1505, 649, 1526, 924);
btn3d(main, 1505, 924, 1526, 945, 'down');
btn3d(main, 745, 945, 762, 966, 'left');
thumb(main, 762, 945, 1250, 966);
trough(main, 1250, 945, 1485, 966);
btn3d(main, 1485, 945, 1505, 966, 'right');

// ---- form footer section ----
corner(root, 6, 975, 26, 995);
section(root, 31, 975, 1577, 995, 'Form Footer');
box(root, 0, 995, 7, 1121, 'bg-[#ece9d8]');
vruler(root, 7, 995, 29, 1121, 1043, 1);
box(root, 29, 995, 31, 1121, 'bg-[#555]');
box(root, 31, 995, 1537, 1048, 'bg-black');
box(root, 31, 1048, 1577, 1121, 'bg-[#848484]');
box(root, 1537, 995, 1577, 1048, 'bg-[#848484]');
box(root, 39, 996, 704, 1046, 'border border-[#808080]');
[
  ['F1', 44, 94, 49, 87, 1019, 1038, 'Help'],
  ['F2', 95, 145, 101, 139, 1009, 1043, 'Undo\nThis'],
  ['F3', 147, 198, 153, 198, 1009, 1043, 'Auto\nISBN'],
  ['F4', 200, 250, 205, 244, 1008, 1042, 'Show\nList'],
  ['F5', 269, 318, 271, 315, 1009, 1043, 'Select\nRec'],
  ['F6', 320, 370, 332, 367, 1009, 1043, 'Add\nTitle'],
  ['F7', 372, 423, 380, 419, 1009, 1043, 'Add\nCopy'],
  ['F8', 425, 475, 432, 470, 1009, 1043, 'Make\n ISBN'],
  ['F9', 494, 545, 495, 548, 1008, 1042, 'Change\nLocate'],
  ['F10', 548, 597, 550, 590, 1009, 1043, 'Copy\nRec'],
  ['F11', 599, 649, 606, 645, 1009, 1043, 'Find\nBook'],
  ['F12', 651, 700, 654, 697, 1009, 1043, 'Sell\nBooks']
].forEach(([f, x1, x2, lx1, lx2, ly1, ly2, t]) => {
  box(root, x1, 998, x2, 1043, 'border-[1.5px] border-[#2e8b2e] rounded-[14px]');
  box(root, x1 + 3, 998, x1 + 40, 1012, 'text-[#2e9b2e] text-[12px] font-bold leading-[14px]', f);
  box(root, lx1, ly1, lx2, ly2, 'border border-[#808080] text-[#ffff00] text-[14px] tracking-[-0.2px] leading-[16px] whitespace-pre pl-[1px] flex items-center', t);
});

// ---- outer scrollbars ----
btn3d(root, 1577, 128, 1598, 146, 'up');
box(root, 1577, 146, 1600, 1121, DITHER);
thumb(root, 1577, 280, 1598, 871);
btn3d(root, 1577, 1100, 1598, 1121, 'down');
box(root, 1600, 124, 1604, 1024, 'bg-[#3c80f0]');
box(root, 1600, 1024, 1604, 1141, 'bg-black');
btn3d(root, 0, 1121, 22, 1141, 'left');
thumb(root, 22, 1121, 1044, 1141);
trough(root, 1044, 1121, 1557, 1141);
btn3d(root, 1557, 1121, 1576, 1141, 'right');
box(root, 1576, 1121, 1600, 1141, 'bg-[#ece9d8]');

// ---- floating toolbox ----
const cell = i => `<svg class="w-[22px] h-[22px]"><use href="#${i}"/></svg>`;
const ROW = 'h-[26px] grid grid-cols-3 items-center justify-items-center bg-[linear-gradient(#d6e6ff_0%,#c4dafe_60%,#a6c3f4_85%,#8fb0e8_100%)]';
box(root, 1229, 805, 1319, 1022, 'bg-[#1a4cc8] p-[3px] flex flex-col', `
  <div class="h-[22px] shrink-0 flex items-center text-white text-[15px] pl-[1px]">Toolb<svg class="ml-[4px] w-[13px] h-[13px] text-white"><use href="#tri"/></svg><svg viewBox="0 0 10 10" class="ml-[15px] w-[9px] h-[9px]"><path d="M1 1l8 8M9 1l-8 8" stroke="#fff" stroke-width="1.500"/></svg></div>
  <div class="h-[27px] flex bg-[linear-gradient(#d6e6ff_0%,#c4dafe_60%,#a6c3f4_85%,#8fb0e8_100%)]">
    <span class="w-[28px] h-[26px] bg-[#f4b060] border border-black flex items-center justify-center">${cell('pointer')}</span>
    <span class="w-[28px] h-[26px] bg-[#f4b060] border border-black flex items-center justify-center">${cell('wand')}</span>
  </div>
  <div class="${ROW}"><span class="font-['Liberation_Serif',serif] font-bold italic text-[18px] leading-none">Aa</span><span class="font-['Liberation_Serif',serif] text-[19px] leading-none text-[#222]">ab|</span>${cell('label-box')}</div>
  <div class="${ROW}">${cell('toggle')}${cell('radio')}${cell('check')}</div>
  <div class="${ROW}">${cell('combo')}${cell('listb')}${cell('cmd')}</div>
  <div class="${ROW}">${cell('img')}${cell('unb')}${cell('bnd')}</div>
  <div class="${ROW}">${cell('pgbr')}${cell('tabc')}${cell('grid')}</div>
  <div class="${ROW}"><svg viewBox="0 0 20 20" class="w-[22px] h-[22px]"><path d="M3 3l14 14" stroke="#223" stroke-width="1.800"/></svg><span class="w-[20px] h-[15px] border-2 border-black bg-[#cfe0fa]"></span>${cell('hammer')}</div>
`);
</script>
</body>
</html>
